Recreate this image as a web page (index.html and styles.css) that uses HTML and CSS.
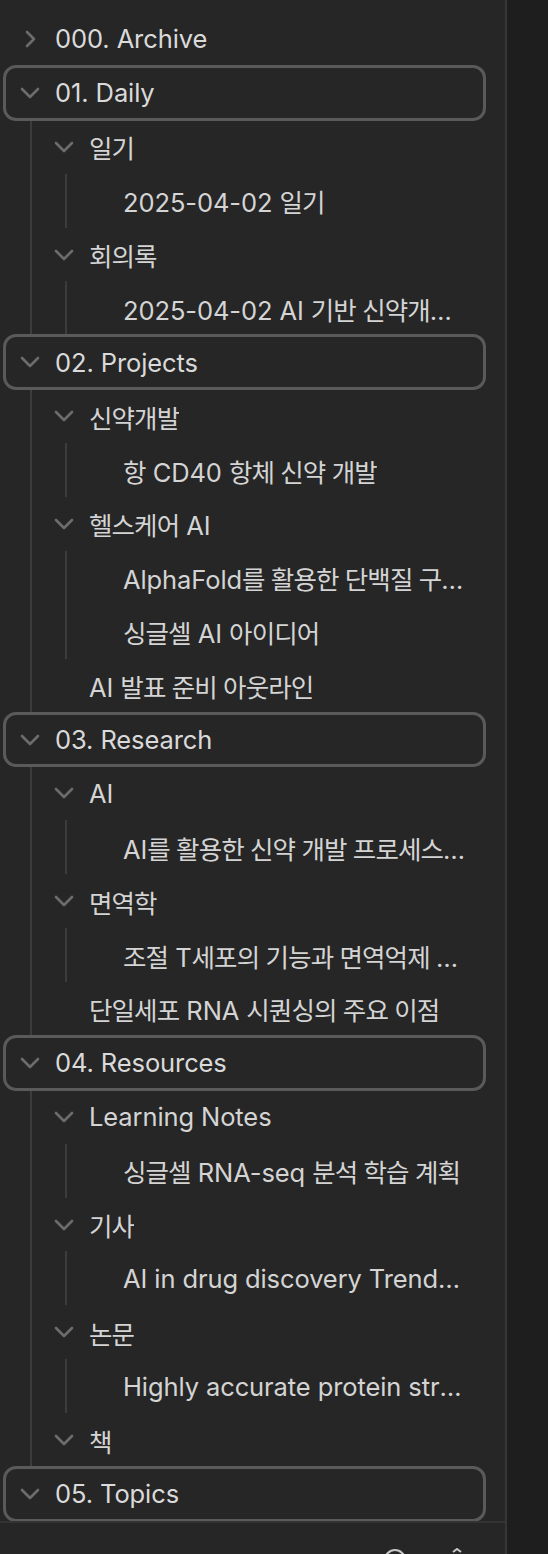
FILE: index.html
```html
<!DOCTYPE html>
<html lang="ko">
<head>
<meta charset="UTF-8"/>
<meta name="viewport" content="width=device-width, initial-scale=1.0"/>
<title>Vault</title>
<link rel="stylesheet" href="styles.css">
</head>
<body>
<div class="app">
  <nav class="sidebar">
    <div class="tree">

      <div class="row top">
        <svg class="chev" viewBox="0 0 20 20"><path d="M7 3 L14 10 L7 17"/></svg>
        <span class="label">000. Archive</span>
      </div>

      <div class="folder">
        <div class="row top boxed">
          <svg class="chev" viewBox="0 0 20 20"><path d="M2 6 L10 14 L18 6"/></svg>
          <span class="label">01. Daily</span>
        </div>
        <div class="children">
          <div class="row sub">
            <svg class="chev" viewBox="0 0 20 20"><path d="M2 6 L10 14 L18 6"/></svg>
            <span class="label"><span class="ko">일기</span></span>
          </div>
          <div class="children inner">
            <div class="row leaf"><span class="label">2025-04-02 <span class="ko">일기</span></span></div>
          </div>
          <div class="row sub">
            <svg class="chev" viewBox="0 0 20 20"><path d="M2 6 L10 14 L18 6"/></svg>
            <span class="label"><span class="ko">회의록</span></span>
          </div>
          <div class="children inner">
            <div class="row leaf"><span class="label">2025-04-02 AI <span class="ko">기반 신약개발 회의록</span></span></div>
          </div>
        </div>
      </div>

      <div class="folder">
        <div class="row top boxed">
          <svg class="chev" viewBox="0 0 20 20"><path d="M2 6 L10 14 L18 6"/></svg>
          <span class="label">02. Projects</span>
        </div>
        <div class="children">
          <div class="row sub">
            <svg class="chev" viewBox="0 0 20 20"><path d="M2 6 L10 14 L18 6"/></svg>
            <span class="label"><span class="ko">신약개발</span></span>
          </div>
          <div class="children inner">
            <div class="row leaf"><span class="label"><span class="ko">항</span> CD40 <span class="ko">항체 신약 개발</span></span></div>
          </div>
          <div class="row sub">
            <svg class="chev" viewBox="0 0 20 20"><path d="M2 6 L10 14 L18 6"/></svg>
            <span class="label"><span class="ko">헬스케어</span> AI</span>
          </div>
          <div class="children inner">
            <div class="row leaf"><span class="label">AlphaFold<span class="ko">를 활용한 단백질 구조 예측</span></span></div>
            <div class="row leaf"><span class="label"><span class="ko">싱글셀</span> AI <span class="ko">아이디어</span></span></div>
          </div>
          <div class="row file"><span class="label">AI <span class="ko">발표 준비 아웃라인</span></span></div>
        </div>
      </div>

      <div class="folder">
        <div class="row top boxed">
          <svg class="chev" viewBox="0 0 20 20"><path d="M2 6 L10 14 L18 6"/></svg>
          <span class="label">03. Research</span>
        </div>
        <div class="children">
          <div class="row sub">
            <svg class="chev" viewBox="0 0 20 20"><path d="M2 6 L10 14 L18 6"/></svg>
            <span class="label">AI</span>
          </div>
          <div class="children inner">
            <div class="row leaf"><span class="label">AI<span class="ko">를 활용한 신약 개발 프로세스 혁신</span></span></div>
          </div>
          <div class="row sub">
            <svg class="chev" viewBox="0 0 20 20"><path d="M2 6 L10 14 L18 6"/></svg>
            <span class="label"><span class="ko">면역학</span></span>
          </div>
          <div class="children inner">
            <div class="row leaf"><span class="label"><span class="ko">조절</span> T<span class="ko">세포의 기능과 면역억제 메커니즘</span></span></div>
          </div>
          <div class="row file"><span class="label"><span class="ko">단일세포</span> RNA <span class="ko">시퀀싱의 주요 이점</span></span></div>
        </div>
      </div>

      <div class="folder">
        <div class="row top boxed">
          <svg class="chev" viewBox="0 0 20 20"><path d="M2 6 L10 14 L18 6"/></svg>
          <span class="label">04. Resources</span>
        </div>
        <div class="children">
          <div class="row sub">
            <svg class="chev" viewBox="0 0 20 20"><path d="M2 6 L10 14 L18 6"/></svg>
            <span class="label">Learning Notes</span>
          </div>
          <div class="children inner">
            <div class="row leaf"><span class="label"><span class="ko">싱글셀</span> RNA-seq <span class="ko">분석 학습 계획</span></span></div>
          </div>
          <div class="row sub">
            <svg class="chev" viewBox="0 0 20 20"><path d="M2 6 L10 14 L18 6"/></svg>
            <span class="label"><span class="ko">기사</span></span>
          </div>
          <div class="children inner">
            <div class="row leaf"><span class="label">AI in drug discovery Trends 2025</span></div>
          </div>
          <div class="row sub">
            <svg class="chev" viewBox="0 0 20 20"><path d="M2 6 L10 14 L18 6"/></svg>
            <span class="label"><span class="ko">논문</span></span>
          </div>
          <div class="children inner">
            <div class="row leaf"><span class="label">Highly accurate protein structure prediction with AlphaFold</span></div>
          </div>
          <div class="row sub">
            <svg class="chev" viewBox="0 0 20 20"><path d="M2 6 L10 14 L18 6"/></svg>
            <span class="label"><span class="ko">책</span></span>
          </div>
        </div>
      </div>

      <div class="folder">
        <div class="row top boxed">
          <svg class="chev" viewBox="0 0 20 20"><path d="M2 6 L10 14 L18 6"/></svg>
          <span class="label">05. Topics</span>
        </div>
      </div>

    </div>
    <div class="footer">
      <svg class="ficon" viewBox="0 0 24 24"><circle cx="12" cy="12" r="10"/></svg>
      <svg class="ficon" viewBox="0 0 24 24"><path d="M8 4 L12 1 L16 4"/></svg>
    </div>
  </nav>
  <div class="panel"></div>
</div>
</body>
</html>
```

FILE: styles.css
```css
* { box-sizing: border-box; }
html, body { margin: 0; height: 100%; }
body { background: #1e1e1e; color: #d4d4d4; font-family: Inter, "Noto Sans CJK KR", sans-serif; font-size: 25.5px; letter-spacing: -0.1px; }

.app { display: flex; height: 1554px; }
.sidebar { width: 507px; background: #262626; border-right: 2px solid #363636; display: flex; flex-direction: column; }
.panel { flex: 1; background: #1e1e1e; }

.tree { flex: 1; overflow: hidden; padding-top: 12px; }
.row { display: flex; align-items: center; height: 53.9px; white-space: nowrap; }
.label { overflow: hidden; text-overflow: ellipsis; min-width: 0; }
.ko { letter-spacing: -0.9px; }

.chev { width: 20px; height: 20px; flex: none; margin-right: 15px; fill: none; stroke: #6c6c6c; stroke-width: 2.6; stroke-linecap: round; stroke-linejoin: round; }

.row.top { margin-left: 4px; width: 481px; padding-left: 16px; color: #dadada; }
.row.boxed { outline: 3px solid #5a5a5a; outline-offset: -2px; border-radius: 12px; }

.children { margin-left: 30px; border-left: 2px solid #3c3c3c; }
.children.inner { margin-left: 33px; }

.row.sub { padding-left: 22px; width: 438px; }
.row.file { padding-left: 57px; width: 438px; }
.row.leaf { padding-left: 56px; width: 403px; }

.footer { height: 33px; border-top: 2px solid #333; display: flex; justify-content: flex-end; align-items: flex-start; padding: 25px 36px 0 0; gap: 38px; overflow: hidden; }
.ficon { width: 24px; height: 24px; flex: none; fill: none; stroke: #c8c8c8; stroke-width: 2; }
```
